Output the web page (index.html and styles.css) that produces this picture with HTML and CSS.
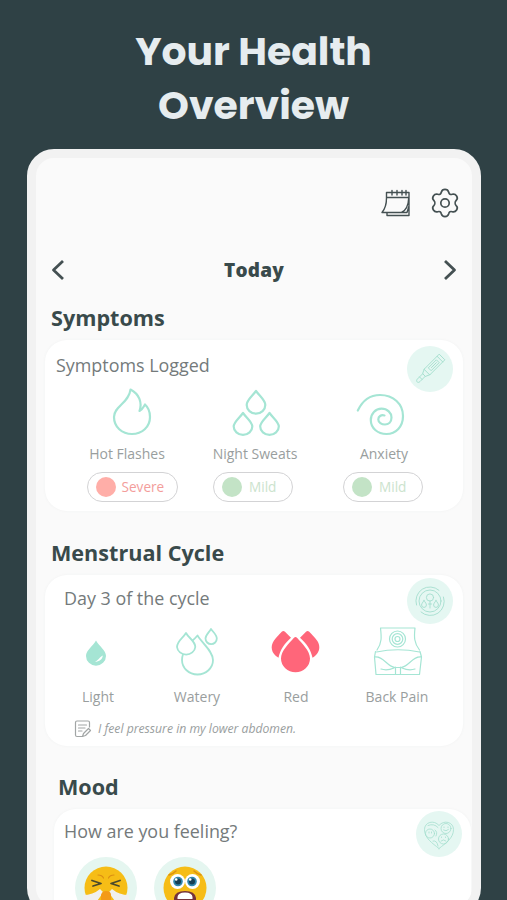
FILE: index.html
```html
<!DOCTYPE html>
<html lang="en">
<head>
  <meta charset="UTF-8" />
  <title>Your Health Overview</title>
  <link rel="stylesheet" href="styles.css">
</head>
<body>

<h1 class="headline">Your Health<br>Overview</h1>

<div class="phone">
  <!-- Top icons -->
  <div class="toolbar">
    <svg class="icon-calendar" width="30" height="28" viewBox="0 0 30 28">
      <path d="M5.5 9V3.5H28V26.5H6V23.5M5.5 8.5H28M5.5 9C5.5 15 4 20 1 23.5H20.5C25.5 21 27.5 15 27.7 9M20.5 23.5H26L28 17" />
      <path d="M11 1.5V6M16 1.5V6M21 1.5V6M25 1.5V6" />
    </svg>
    <svg class="icon-gear" width="30" height="30" viewBox="0 0 30 30">
      <path d="M11.3 4.3C12.3 .5 17.7 .5 18.7 4.3C19.1 6.2 20.4 6.9 22.2 6.3C25.9 5.2 28.9 9.7 26.2 12.3C24.8 13.8 24.8 16.2 26.2 17.7C28.9 20.3 25.9 24.8 22.2 23.7C20.4 23.1 19.1 23.8 18.7 25.7C17.7 29.5 12.3 29.5 11.3 25.7C10.9 23.8 9.6 23.1 7.8 23.7C4.1 24.8 1.1 20.3 3.8 17.7C5.2 16.2 5.2 13.8 3.8 12.3C1.1 9.7 4.1 5.2 7.8 6.3C9.6 6.9 10.9 6.2 11.3 4.3Z" />
      <circle cx="15" cy="15" r="4.2" />
    </svg>
  </div>

  <!-- Day navigation -->
  <div class="day-nav">
    <svg class="chevron" width="14" height="22" viewBox="0 0 14 22"><path d="M12 2L2.5 11L12 20" /></svg>
    <span class="day">Today</span>
    <svg class="chevron" width="14" height="22" viewBox="0 0 14 22"><path d="M2 2L11.5 11L2 20" /></svg>
  </div>

  <h2 class="title">Symptoms</h2>
  <div class="card">
    <div class="badge">
      <svg width="46" height="46" viewBox="0 0 46 46">
        <g transform="translate(23 23) rotate(-45)">
          <path d="M-4 -4H17V4H-4ZM14 -4V4M0 -2H11V2H0ZM2 0H9M-4 -4L-8.5 -2V2L-4 4M-8.5 -1.8H-16C-19 -1.8 -19 1.8 -16 1.8H-8.5M-13 -1.8V1.8" />
        </g>
      </svg>
    </div>
    <p class="card-label">Symptoms Logged</p>
    <div class="symptoms">
      <div class="symptom hot">
        <svg width="50" height="50" viewBox="0 0 50 50">
          <path d="M23.5 2.5C32 7 35.5 15 32.5 24C35.5 22.5 36.5 20 38 17.5C42 21 43 26 43 30C43 40 35 47 25 47C15 47 7 40 7 30C7 19 22 16 23.5 2.5Z" />
        </svg>
        <span class="name">Hot Flashes</span>
        <span class="pill severe">Severe</span>
      </div>
      <div class="symptom sweats">
        <svg width="50" height="50" viewBox="0 0 50 50">
          <path d="M25 4C29 9.5 34.3 13 34.3 18A9.3 8.7 0 0 1 15.7 18C15.7 13 21 9.5 25 4Z" />
          <path d="M12 26C16 31.5 21.3 35 21.3 39.5A9.3 8.4 0 0 1 2.7 39.5C2.7 35 8 31.5 12 26Z" />
          <path d="M38.5 26C42.5 31.5 47.8 35 47.8 39.5A9.3 8.4 0 0 1 29.2 39.5C29.2 35 34.5 31.5 38.5 26Z" />
        </svg>
        <span class="name">Night Sweats</span>
        <span class="pill mild">Mild</span>
      </div>
      <div class="symptom anxiety">
        <svg width="50" height="50" viewBox="0 0 50 50">
          <path d="M1.8 23.5C7 12.5 15 8 24 8C37.5 8 47 17 47 29C47 39.5 40 47 30.5 47C21.5 47 14.8 41 14.8 33C14.8 26.5 19.5 21.7 25.5 21.7C31.5 21.7 35.5 26 35.5 30.5C35.5 35 32.5 37.5 29 37.5C25.5 37.5 22.3 35.5 22.3 32.5C22.3 29.5 25 27.5 28.5 28.5" />
        </svg>
        <span class="name">Anxiety</span>
        <span class="pill mild">Mild</span>
      </div>
    </div>
  </div>

  <h2 class="title">Menstrual Cycle</h2>
  <div class="card cycle-card">
    <div class="badge">
      <svg width="46" height="46" viewBox="0 0 46 46">
        <circle cx="23" cy="23" r="11" />
        <path d="M9.5 27A14 14 0 0 1 32 12.3M36.5 19A14 14 0 0 1 14 34" />
        <circle cx="23" cy="19.5" r="3.6" />
        <path d="M23 23V30M21.5 26H24.5" />
        <path d="M17 22.5C18.5 25 19.4 25.5 19.4 27A2.4 2.4 0 0 1 14.6 27C14.6 25.5 15.5 25 17 22.5ZM29 22.5C30.5 25 31.4 25.5 31.4 27A2.4 2.4 0 0 1 26.6 27C26.6 25.5 27.5 25 29 22.5Z" />
      </svg>
    </div>
    <p class="card-label">Day 3 of the cycle</p>
    <div class="cycle">
      <div class="sign light">
        <svg width="50" height="52" viewBox="0 0 50 52">
          <path class="fill-mint" d="M23 13.5C26.5 19.5 33 23.5 33 29A10 9.7 0 0 1 13 29C13 23.5 19.5 19.5 23 13.5Z" />
          <path class="shine" d="M29.8 28.5C29.3 32.5 26.5 34.5 22 35C26.5 32 26 30.5 29.8 28.5Z" />
        </svg>
        <span class="name">Light</span>
      </div>
      <div class="sign watery">
        <svg width="50" height="52" viewBox="0 0 50 52">
          <path d="M20.5 13.5Q23 11.5 25.5 8.5C30 16 41 24 41 33A15.5 14.5 0 0 1 10 33Q10 30 11 27.5" />
          <path d="M14 6C16.5 11 23.3 14 23.3 20A9.2 8.5 0 0 1 5 20C5 14 11 11 14 6Z" />
          <path d="M39 2C41.5 5.5 44.8 8 44.8 11.5A5.5 5.5 0 0 1 33.5 11.5C33.5 8 37 5.5 39 2Z" />
        </svg>
        <span class="name">Watery</span>
      </div>
      <div class="sign red">
        <svg width="50" height="52" viewBox="0 0 50 52">
          <g transform="translate(0.5 1)">
            <path class="fill-red" d="M11.5 3.5Q13 2.3 14.5 3.7L20.5 9.8C14 15.5 9.5 22 8 29.8C.5 25.5 -.5 18 3.5 12.5C6 9 9 6 11.5 3.5Z" />
            <path class="fill-red" d="M38.5 3.5Q37 2.3 35.5 3.7L29.5 9.8C36 15.5 40.5 22 42 29.8C49.5 25.5 50.5 18 46.5 12.5C44 9 41 6 38.5 3.5Z" />
            <path class="fill-red" d="M23.5 9.8Q25 8.2 26.5 9.8C31.5 15.5 39.5 23 39.5 30.5A14.5 13.7 0 0 1 10.5 30.5C10.5 23 18.5 15.5 23.5 9.8Z" />
          </g>
        </svg>
        <span class="name">Red</span>
      </div>
      <div class="sign pain">
        <svg width="50" height="52" viewBox="0 0 50 52">
          <path d="M7.5 1H42M7.5 1C8.5 10 9 16 4 23M42 1C41 10 41 16 46.5 23M3.5 25Q25 20.5 46.5 25M2.5 24.5L1.5 30L3 47.5H46.5L48.5 30L47 24.5M1.5 30C11 29 13 39 22 40.5H28C37 39 39 29 48.5 30M22.5 40V47.5M27.5 40V47.5M8 42Q14 44 21 41M42 42Q36 44 29 41" />
          <circle cx="24.5" cy="12" r="8" />
          <circle cx="24.5" cy="12" r="5.3" />
          <circle cx="24.5" cy="12" r="2.5" />
        </svg>
        <span class="name">Back Pain</span>
      </div>
    </div>
    <div class="note">
      <svg width="18" height="18" viewBox="0 0 18 18">
        <path d="M15.5 7V2.5Q15.5 1 14 1H3Q1.5 1 1.5 2.5V15Q1.5 16.5 3 16.5H8M4.5 5H12.5M4.5 8H11M4.5 11H8M9.5 13.5L14.5 8.5L16.5 10.5L11.5 15.5L8.5 16.5Z" />
      </svg>
      <span>I feel pressure in my lower abdomen.</span>
    </div>
  </div>

  <h2 class="title mood-title">Mood</h2>
  <div class="card mood-card">
    <div class="badge">
      <svg width="46" height="46" viewBox="0 0 46 46">
        <path d="M23 37.5C16 32 8.5 27 8.5 18.5C8.5 11 18 8.5 23 14.5C28 8.5 37.5 11 37.5 18.5C37.5 27 30 32 23 37.5Z" />
        <circle cx="30" cy="17.5" r="5" />
        <circle cx="27.5" cy="28" r="5" />
        <circle cx="14" cy="22.5" r="4.5" />
        <path d="M12 14.5Q18 12 22 16.5M19 19Q22 21 20 25M17 30Q21 29 22 35M27.5 19Q30 21 32.5 18.5M25 30Q27.5 27.5 30 30M28 16V16.5M32 16V16.5M25.5 26V26.5M29.5 26V26.5M13 21V22M15.5 21V22" />
      </svg>
    </div>
    <p class="card-label">How are you feeling?</p>
    <div class="faces">
      <!-- Frustrated -->
      <div class="face">
        <svg width="62" height="62" viewBox="0 0 62 62">
          <circle fill="#f6bd16" cx="31" cy="31" r="21.5" />
          <g fill="none" stroke-linecap="round" stroke-linejoin="round">
            <path stroke="#dc9013" stroke-width="1.2" d="M23 18Q27 18 28.5 21M39 18Q35 18 33.5 21" />
            <path stroke="#4b4a2c" stroke-width="1.8" d="M17 23.5L26 26.5L18 29M45 23.5L36 26.5L44 29" />
          </g>
          <path fill="#f0f0f0" d="M8 38Q18 38 25 32L28 35Q25 41 21 45H8ZM54 38Q44 38 37 32L34 35Q37 41 41 45H54Z" />
          <path fill="#f39a18" d="M26 44V38Q27 34 31 34Q36 34 36 38V44Z" />
        </svg>
      </div>
      <!-- Scared -->
      <div class="face">
        <svg width="62" height="62" viewBox="0 0 62 62">
          <circle fill="#f6bd16" cx="31" cy="31" r="21.5" />
          <path fill="none" stroke="#dc9013" stroke-width="1.5" d="M15 18Q19 17 22 14M47 18Q43 17 40 14" />
          <circle fill="#fff" cx="23.5" cy="24.5" r="7.5" />
          <circle fill="#fff" cx="38.5" cy="24.5" r="7.5" />
          <circle fill="#3287ad" cx="24" cy="24.5" r="4.8" />
          <circle fill="#3287ad" cx="38" cy="24.5" r="4.8" />
          <circle fill="#183f55" cx="24" cy="24.5" r="3" />
          <circle fill="#183f55" cx="38" cy="24.5" r="3" />
          <circle fill="#fff" cx="22.2" cy="22.5" r="1.3" />
          <circle fill="#fff" cx="36.2" cy="22.5" r="1.3" />
          <path fill="#75333c" d="M20 48V41Q21 34 31 34Q41 34 42 41V48Z" />
          <path fill="#fff" d="M23.5 40Q24 35.5 31 35.5Q38 35.5 38.5 40V42H23.5Z" />
        </svg>
      </div>
    </div>
  </div>
</div>

</body>
</html>
```
FILE: styles.css
```css
body {
  margin: 0;
  height: 900px;
  overflow: hidden;
  background: #2f4145;
  font-family: "Open Sans", "Noto Sans", sans-serif;
  color: #394a4b;
}

.headline {
  margin: 0;
  padding-top: 25px;
  text-align: center;
  font-family: Poppins, Inter, sans-serif;
  font-size: 39.3px;
  font-weight: 700;
  line-height: 54px;
  color: #e6ecef;
}

/* Phone frame */
.phone {
  box-sizing: border-box;
  width: 454px;
  height: 766px;
  margin: 16px 0 0 27px;
  border: 9px solid #f2f2f2;
  border-radius: 27px;
  background: #fafafa;
  overflow: hidden;
}

svg {
  display: block;
  fill: none;
  stroke-linecap: round;
  stroke-linejoin: round;
}

.toolbar {
  display: flex;
  justify-content: flex-end;
  align-items: center;
  gap: 19px;
  padding: 30px 12px 0 0;
  stroke: #445052;
  stroke-width: 1.7;
}

.icon-calendar {
  stroke-width: 1.4;
}

.day-nav {
  display: flex;
  justify-content: space-between;
  align-items: center;
  height: 30px;
  margin: 37px 15px 0;
}

.chevron {
  stroke: #445052;
  stroke-width: 2.8;
  stroke-linecap: butt;
}

.day {
  font-size: 19px;
  font-weight: 800;
  letter-spacing: 0.2px;
}

.title {
  margin: 18px 0 0 15px;
  font-size: 21.6px;
  font-weight: 700;
  line-height: 30px;
}

/* Cards */
.card {
  position: relative;
  box-sizing: border-box;
  width: 418px;
  height: 171px;
  margin: 7px 0 0 9px;
  padding-top: 12px;
  border-radius: 22px;
  background: #fff;
  box-shadow: 0 0 3px #f1f2f2;
}

.card + .title {
  margin-top: 27px;
}

.card-label {
  margin: 0 0 0 11px;
  font-size: 17.9px;
  line-height: 26px;
  color: #747a7b;
}

.badge {
  position: absolute;
  top: 6px;
  right: 10px;
  border-radius: 50%;
  background: #e5f7f2;
  stroke: #a4dece;
  stroke-width: 0.9;
}

.name {
  font-size: 14px;
  line-height: 20px;
  color: #999e9e;
}

/* Symptoms */
.symptoms {
  display: grid;
  grid-template-columns: repeat(3, 128px);
  margin: 9px 0 0 18px;
  stroke: #a5e5d4;
  stroke-width: 2.2;
}

.symptom {
  display: flex;
  flex-direction: column;
  align-items: center;
}

.hot svg,
.hot .pill {
  margin-left: 10px;
}

.sweats svg {
  margin-left: 2px;
}

.anxiety svg {
  margin-right: 5px;
}

.anxiety .name {
  margin-left: 2px;
}

.symptom .name {
  margin-top: 7px;
}

.pill {
  display: flex;
  align-items: center;
  box-sizing: border-box;
  width: 80px;
  height: 30px;
  margin-top: 8px;
  padding-left: 8px;
  border: 1px solid #d3d3d5;
  border-radius: 15px;
  font-size: 13.6px;
  line-height: 18px;
}

.pill::before {
  content: "";
  width: 20px;
  height: 20px;
  margin-right: 7px;
  border-radius: 50%;
}

.severe {
  width: 91px;
  color: #f39d9b;
}

.severe::before {
  margin-right: 6px;
  background: #ffaea8;
}

.mild {
  color: #cbe3cd;
}

.mild::before {
  background: #c3e3c6;
}

.sweats .pill {
  margin-right: 4px;
}

/* Menstrual cycle */
.cycle-card {
  padding-top: 10px;
}

.cycle-card .badge {
  top: 3px;
}

.cycle-card .card-label {
  margin-left: 19px;
}

.cycle {
  display: grid;
  grid-template-columns: repeat(4, 100px);
  margin: 16px 0 0 2px;
  stroke: #a5e5d4;
  stroke-width: 1.8;
}

.sign {
  display: flex;
  flex-direction: column;
  align-items: center;
}

.sign .name {
  margin-top: 8px;
}

.light .name {
  margin-left: 2px;
}

.light svg {
  margin-left: 1px;
}

.red svg {
  margin-right: 4px;
}

.red .name {
  margin-right: 2px;
}

.pain svg {
  margin-left: 1px;
  stroke-width: 1.2;
}

.fill-mint {
  fill: #a5e5d4;
  stroke: none;
}

.shine {
  fill: #fff;
  stroke: none;
}

.fill-red {
  fill: #ff667a;
  stroke: none;
}

.note {
  display: flex;
  align-items: center;
  gap: 6px;
  margin: 13px 0 0 29px;
  font-size: 12.2px;
  font-style: italic;
  line-height: 18px;
  color: #999e9e;
  stroke: #a1a5a5;
  stroke-width: 1.2;
}

/* Mood */
.card + .mood-title {
  margin-left: 22px;
  margin-top: 26px;
}

.mood-card {
  width: 417px;
  margin-left: 18px;
  padding-top: 9px;
}

.mood-card .badge {
  top: 2px;
  right: 9px;
  stroke-width: 0.8;
}

.mood-card .card-label {
  margin-left: 10px;
}

.faces {
  display: flex;
  gap: 17px;
  margin: 13px 0 0 21px;
}

.face {
  border-radius: 50%;
  background: #e5f6f0;
}
```
